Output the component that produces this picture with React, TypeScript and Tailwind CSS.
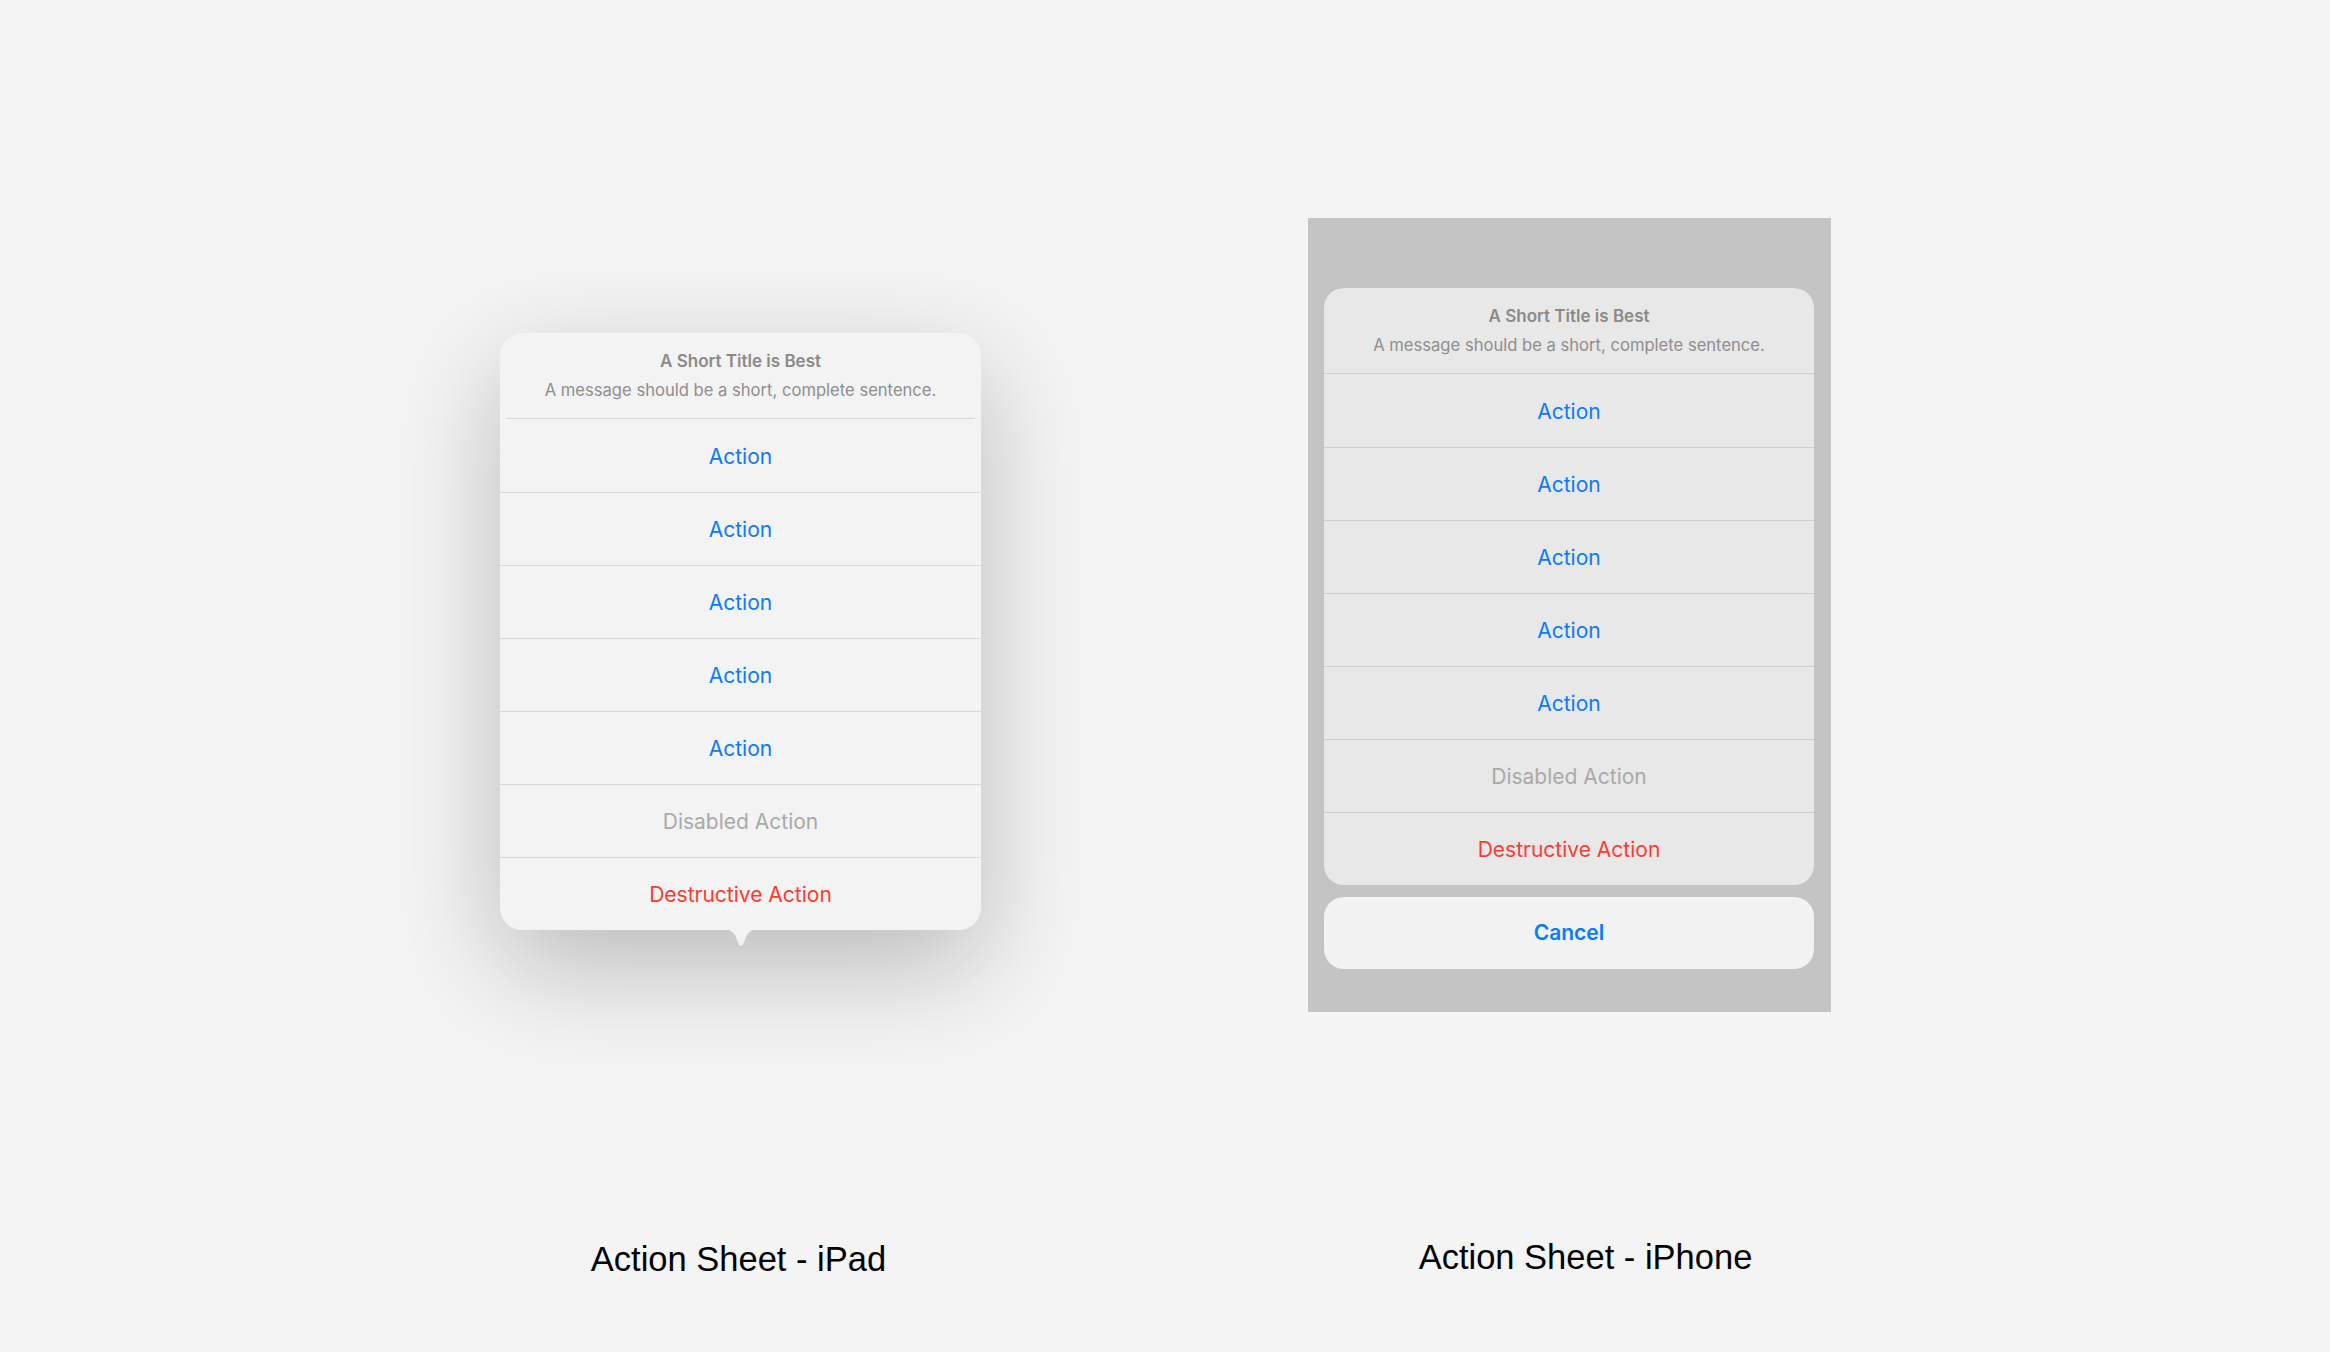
import React from 'react';

type Row = { label: string; kind: 'action' | 'disabled' | 'destructive' };

const rows: Row[] = [
  { label: 'Action', kind: 'action' },
  { label: 'Action', kind: 'action' },
  { label: 'Action', kind: 'action' },
  { label: 'Action', kind: 'action' },
  { label: 'Action', kind: 'action' },
  { label: 'Disabled Action', kind: 'disabled' },
  { label: 'Destructive Action', kind: 'destructive' },
];

const rowColor = {
  action: 'text-[#0a7aff]',
  disabled: 'text-[#a9a9a9]',
  destructive: 'text-[#ff3b30]',
};

const SheetHeader = ({ inset }: { inset: boolean }) => (
  <div className={`h-[86px] flex flex-col items-center justify-start pt-[17px] border-b ${inset ? 'mx-[6px] border-[#d9d9d9]' : 'border-[#cfcfcf]'}`}>
    <div className="text-[17px] leading-[22px] font-semibold text-[#8a8a8a]">A Short Title is Best</div>
    <div className="text-[16.6px] leading-[22px] mt-[7px] text-[#8e8e8e]">A message should be a short, complete sentence.</div>
  </div>
);

const SheetRows = ({ border }: { border: string }) => (
  <div>
    {rows.map((row, idx) => (
      <div
        key={idx}
        className={`h-[73px] flex items-center justify-center pt-[2px] text-[21px] ${rowColor[row.kind]} ${idx > 0 ? `border-t ${border}` : ''}`}
      >
        {row.label}
      </div>
    ))}
  </div>
);

export default function App() {
  return (
    <div className="w-full h-[1352px] bg-[#f4f4f4] flex font-['Inter',sans-serif] overflow-hidden">
      {/* iPad */}
      <div className="ml-[500px] w-[481px] flex flex-col">
        <div className="pt-[333px] relative">
          <div className="relative">
            <div className="bg-[#f3f3f3] rounded-[22px] shadow-[0_36px_110px_rgba(0,0,0,0.24)] overflow-hidden">
              <SheetHeader inset />
              <SheetRows border="border-[#d9d9d9]" />
            </div>
            <svg className="absolute left-1/2 -translate-x-1/2 -bottom-[17px]" width="40" height="18" viewBox="0 0 40 18">
              <path d="M0 0 C8 0 10 1 14 6 L18 15.5 Q20 18 22 15.5 L26 6 C30 1 32 0 40 0 Z" fill="#f3f3f3" />
            </svg>
          </div>
        </div>
        <div className="mt-[309px] pr-[4px] flex justify-center">
          <div className="whitespace-nowrap text-[34.5px] leading-[40px] text-black font-['Liberation_Sans',sans-serif]">Action Sheet - iPad</div>
        </div>
      </div>

      {/* iPhone */}
      <div className="ml-[327px] w-[523px] flex flex-col">
        <div className="mt-[218px] h-[794px] bg-[#c4c4c4] flex flex-col pl-[16px] pr-[17px] pt-[70px]">
          <div className="bg-[#e8e8e8] rounded-[20px] overflow-hidden">
            <SheetHeader inset={false} />
            <SheetRows border="border-[#cfcfcf]" />
          </div>
          <div className="mt-[12px] h-[72px] bg-[#f2f2f2] rounded-[20px] flex items-center justify-center text-[21px] font-semibold text-[#0a7aff]">
            Cancel
          </div>
        </div>
        <div className="mt-[225px] pl-[32px] flex justify-center">
          <div className="whitespace-nowrap text-[34.5px] leading-[40px] text-black font-['Liberation_Sans',sans-serif]">Action Sheet - iPhone</div>
        </div>
      </div>
    </div>
  );
}
